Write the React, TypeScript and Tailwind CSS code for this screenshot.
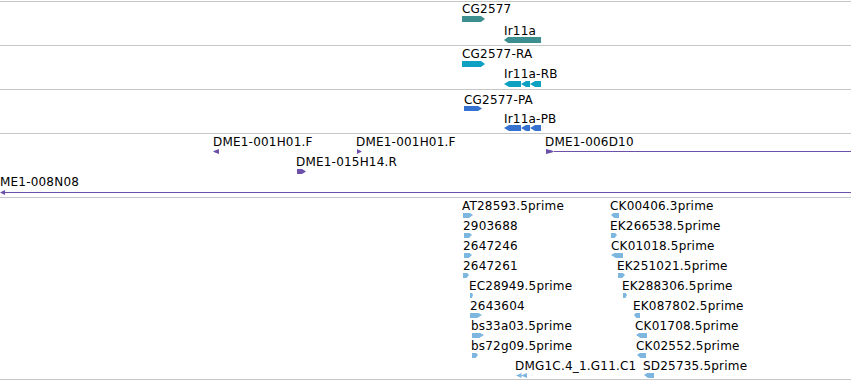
import React from "react";

type Dir = "l" | "r";
type Shape = "gene" | "multi" | "est" | "tri" | "dbl";

// x = label position on the ruler, gx = glyph start, dy = glyph offset below label box
type Feat = {
  label: string;
  x: number;
  gx: number;
  w: number;
  h: number;
  dir: Dir;
  shape: Shape;
  dy?: number;
  span?: boolean; // line continues to the right edge
  back?: boolean; // line runs from the glyph to the right edge, glyph at start
};

type Lane = { top: number; feats: Feat[] };

const TEAL = "#3d8e8e";
const CYAN = "#0fa1c1";
const BLUE = "#3571cf";
const PURPLE = "#6c50a9";
const EST = "#7db6de";

function points(shape: Shape, w: number, h: number): string[] {
  if (shape === "gene") return [`0,0 ${w - 4},0 ${w},${h / 2} ${w - 4},${h} 0,${h}`];
  if (shape === "tri") return [`0,0 ${w - 2},${h * 0.3} ${w},${h / 2} ${w - 2},${h * 0.7} 0,${h}`];
  if (shape === "est") return [`0,0 ${w * 0.7},0 ${w},${h * 0.4} ${w * 0.6},${h} 0,${h}`];
  if (shape === "dbl") {
    const m = w / 2;
    return [`0,${h / 2} ${m},0 ${m},${h}`, `${m - 0.5},${h / 2} ${w},0 ${w},${h}`];
  }
  // exons joined, each pointing left
  const segs = [
    [0, 17],
    [17, 26],
    [26, w],
  ];
  return segs.map(([a, b]) => `${a},${h / 2} ${a + 5},0 ${b},0 ${b},${h} ${a + 5},${h}`);
}

function Glyph({ f, color }: { f: Feat; color: string }) {
  const flip = f.dir === "l" && f.shape !== "multi" && f.shape !== "dbl";
  return (
    <svg className="block shrink-0" width={f.w} height={f.h} viewBox={`0 0 ${f.w} ${f.h}`}>
      <g transform={flip ? `translate(${f.w} 0) scale(-1 1)` : undefined}>
        {points(f.shape, f.w, f.h).map((p, i) => (
          <polygon key={i} points={p} fill={color} />
        ))}
      </g>
    </svg>
  );
}

function Feature({ f, color }: { f: Feat; color: string }) {
  return (
    <div className="absolute top-0 right-0 flex flex-col items-start" style={{ left: f.x }}>
      <div className="whitespace-nowrap text-black">{f.label}</div>
      <div
        className="flex w-full items-center"
        style={{ paddingLeft: f.gx - f.x, marginTop: f.dy ?? 0 }}
      >
        <Glyph f={f} color={color} />
        {f.span && <div className="h-px flex-1 bg-[#6c50a9]" />}
      </div>
    </div>
  );
}

function Track({ lanes, color, className }: { lanes: Lane[]; color: string; className: string }) {
  return (
    <div className={`flex flex-col border-t border-[#c6c6c6] ${className}`}>
      {lanes.map((lane, i) => (
        <div key={i} className="relative h-[20px]" style={{ marginTop: lane.top }}>
          {lane.feats.map((f, j) => (
            <Feature key={j} f={f} color={color} />
          ))}
        </div>
      ))}
    </div>
  );
}

const gene = (label: string, x: number, w: number, h: number, dir: Dir, shape: Shape): Feat => ({
  label,
  x,
  gx: x,
  w,
  h,
  dir,
  shape,
});

const t1: Lane[] = [
  { top: 0, feats: [gene("CG2577", 462, 23, 6, "r", "gene")] },
  { top: 2, feats: [{ ...gene("Ir11a", 504, 37, 6, "l", "gene"), dy: -1 }] },
];
const t2: Lane[] = [
  { top: 1, feats: [gene("CG2577-RA", 462, 23, 6, "r", "gene")] },
  { top: 0, feats: [gene("Ir11a-RB", 504, 37, 6, "l", "multi")] },
];
const t3: Lane[] = [
  { top: 3, feats: [{ ...gene("CG2577-PA", 464, 18, 5, "r", "gene"), dy: -1 }] },
  { top: -1, feats: [{ ...gene("Ir11a-PB", 504, 37, 6, "l", "multi"), dy: -1 }] },
];

const t4: Lane[] = [
  {
    top: 1,
    feats: [
      { label: "DME1-001H01.F", x: 213, gx: 213, w: 6, h: 5, dir: "l", shape: "tri" },
      { label: "DME1-001H01.F", x: 356, gx: 357, w: 5, h: 5, dir: "r", shape: "tri" },
      { label: "DME1-006D10", x: 545, gx: 546, w: 8, h: 5, dir: "r", shape: "tri", span: true },
    ],
  },
  {
    top: 0,
    feats: [{ label: "DME1-015H14.R", x: 296, gx: 297, w: 9, h: 5, dir: "r", shape: "gene" }],
  },
  {
    top: 0,
    feats: [{ label: "ME1-008N08", x: 0, gx: 0, w: 5, h: 5, dir: "l", shape: "tri", dy: 1, span: true }],
  },
];

const est = (label: string, x: number, gx: number, w: number, dir: Dir, shape: Shape = "est"): Feat => ({
  label,
  x,
  gx,
  w,
  h: 5,
  dir,
  shape,
});

const leftCol: Feat[] = [
  est("AT28593.5prime", 462, 463, 10, "r"),
  est("2903688", 463, 464, 8, "r"),
  est("2647246", 463, 464, 8, "r"),
  est("2647261", 463, 463, 6, "r"),
  est("EC28949.5prime", 469, 470, 3, "r"),
  est("2643604", 470, 470, 12, "r"),
  est("bs33a03.5prime", 471, 472, 12, "r"),
  est("bs72g09.5prime", 471, 472, 6, "r"),
  est("DMG1C.4_1.G11.C1", 515, 516, 11, "l", "dbl"),
];
const rightCol: Feat[] = [
  est("CK00406.3prime", 610, 611, 8, "l"),
  est("EK266538.5prime", 610, 611, 6, "r"),
  est("CK01018.5prime", 611, 611, 12, "l"),
  est("EK251021.5prime", 617, 618, 7, "r"),
  est("EK288306.5prime", 622, 623, 4, "r"),
  est("EK087802.5prime", 633, 634, 6, "l"),
  est("CK01708.5prime", 635, 636, 11, "l"),
  est("CK02552.5prime", 636, 637, 9, "l"),
  est("SD25735.5prime", 643, 644, 10, "l"),
];
const t5: Lane[] = leftCol.map((f, i) => ({ top: i === 0 ? 1 : 0, feats: [f, rightCol[i]] }));

export default function App() {
  return (
    <div className="flex h-[381px] w-[851px] flex-col overflow-hidden bg-white pt-px font-['DejaVu_Sans',sans-serif] text-[12px] leading-[14px] tracking-[0.2px]">
      <Track lanes={t1} color={TEAL} className="h-[44px] shrink-0" />
      <Track lanes={t2} color={CYAN} className="h-[44px] shrink-0" />
      <Track lanes={t3} color={BLUE} className="h-[44px] shrink-0" />
      <Track lanes={t4} color={PURPLE} className="h-[64px] shrink-0" />
      <Track lanes={t5} color={EST} className="h-[183px] shrink-0 border-b" />
    </div>
  );
}
